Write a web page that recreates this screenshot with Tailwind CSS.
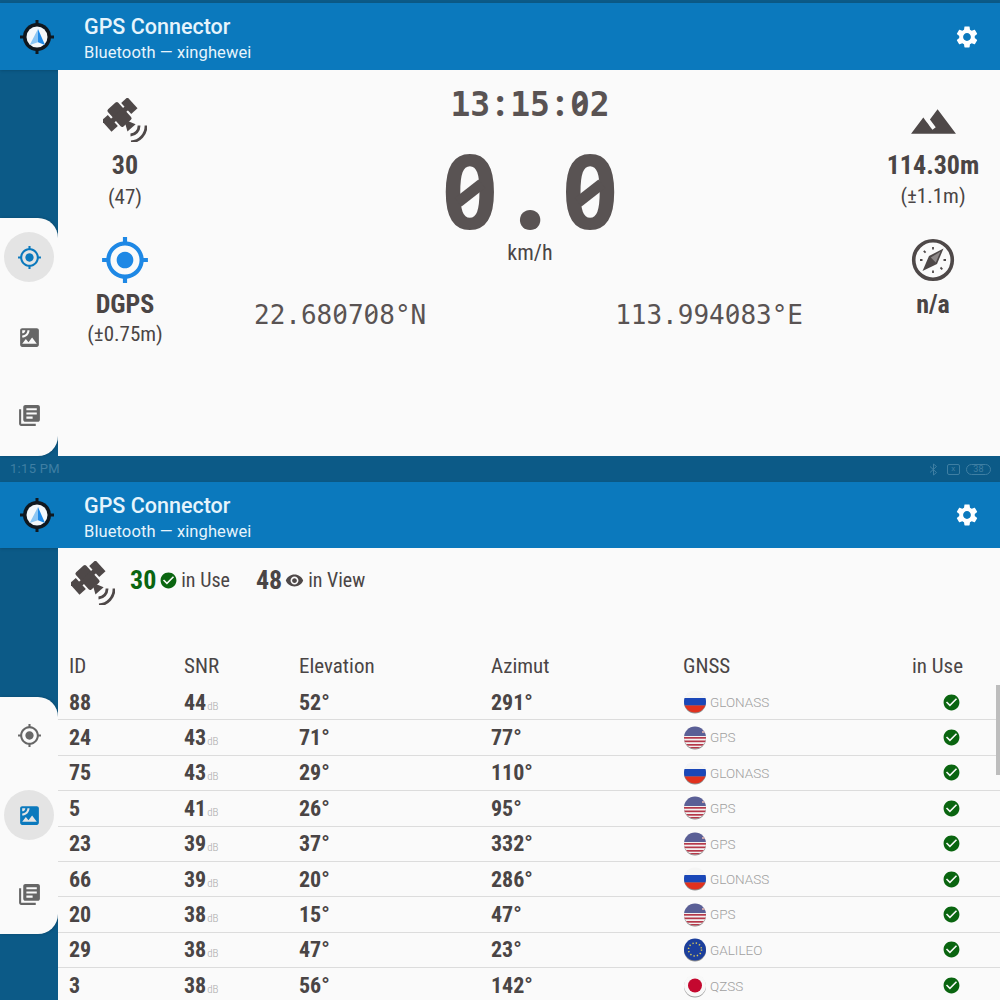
<!DOCTYPE html>
<html lang="en">
<head>
    <meta charset="UTF-8" />
    <title>GPS Connector</title>
    <script src="https://cdn.jsdelivr.net/npm/@tailwindcss/browser@4"></script>
</head>
<body class="bg-[#0c5a87] font-[Roboto,sans-serif] text-[#4a4545]">

<!-- shared icons -->
<svg class="absolute h-0 w-0">
    <defs>
        <clipPath id="flagClip"><circle cx="12" cy="11.5" r="11"/></clipPath>
        <symbol id="logo" viewBox="0 0 36 36">
            <path d="M16.500 1h3v34h-3zM1 16.500h34v3H1z" fill="#10181f"/>
            <circle cx="18" cy="18" r="14" fill="#10181f"/>
            <circle cx="18" cy="18" r="10.500" fill="#f4f8fb"/>
            <path d="M19 10 10.700 26l8.300-2.700z" fill="#8cc6f4"/>
            <path d="M19 10 26 26l-7-2.700z" fill="#1e88e5"/>
        </symbol>
        <symbol id="sat" viewBox="0 0 44 44">
            <g fill="#4e4848" transform="translate(16.500 16.500) rotate(-42)">
                <rect x="-7" y="-11.500" width="14" height="23" rx="2"/>
                <rect x="-10" y="-2.500" width="20" height="5"/>
                <rect x="-17.500" y="-7.500" width="8.500" height="15"/>
                <rect x="9" y="-7.500" width="8.500" height="15"/>
                <path d="M-2 11h4l3.500 7h-11z"/>
            </g>
            <path d="M43 27.500A16 16 0 0 1 28 44M36 27.500A9 9 0 0 1 27.500 37" fill="none" stroke="#4e4848" stroke-width="2.800"/>
        </symbol>
        <symbol id="gpsFixed" viewBox="0 0 24 24">
            <path d="M12 8c-2.210 0-4 1.790-4 4s1.790 4 4 4 4-1.790 4-4-1.790-4-4-4zm8.940 3c-.46-4.170-3.770-7.480-7.940-7.940V1h-2v2.060C6.830 3.520 3.520 6.830 3.060 11H1v2h2.060c.46 4.170 3.770 7.480 7.940 7.940V23h2v-2.060c4.170-.46 7.480-3.770 7.940-7.940H23v-2h-2.060zM12 19c-3.870 0-7-3.130-7-7s3.130-7 7-7 7 3.130 7 7-3.130 7-7 7z"/>
        </symbol>
        <symbol id="satellite" viewBox="0 0 24 24">
            <path d="M19 3H5c-1.100 0-2 .9-2 2v14c0 1.100.9 2 2 2h14c1.100 0 2-.9 2-2V5c0-1.100-.9-2-2-2zM5 4.990h3C8 6.650 6.660 8 5 8V4.990zM5 12v-2c2.760 0 5-2.250 5-5.010h2C12 8.860 8.870 12 5 12zm0 6l3.500-4.500 2.500 3.010L14.500 12l4.500 6H5z"/>
        </symbol>
        <symbol id="books" viewBox="0 0 24 24">
            <path d="M4 6H2v14c0 1.100.9 2 2 2h14v-2H4V6zm16-4H8c-1.100 0-2 .9-2 2v12c0 1.100.9 2 2 2h12c1.100 0 2-.9 2-2V4c0-1.100-.9-2-2-2zm-1 9H9V9h10v2zm-4 4H9v-2h6v2zm4-8H9V5h10v2z"/>
        </symbol>
        <symbol id="gear" viewBox="0 0 24 24">
            <path d="M19.140 12.940c.04-.3.06-.61.06-.94 0-.32-.02-.64-.07-.94l2.030-1.580c.18-.14.23-.41.12-.61l-1.920-3.320c-.12-.22-.37-.29-.59-.22l-2.390.96c-.5-.38-1.030-.7-1.620-.94l-.36-2.540c-.04-.24-.24-.41-.48-.41h-3.840c-.24 0-.43.17-.47.41l-.36 2.540c-.59.24-1.130.57-1.620.94l-2.390-.96c-.22-.08-.47 0-.59.22L2.740 8.870c-.12.21-.08.47.12.61l2.030 1.580c-.05.3-.09.63-.09.94s.02.64.07.94l-2.030 1.580c-.18.14-.23.41-.12.61l1.920 3.320c.12.22.37.29.59.22l2.390-.96c.5.38 1.030.7 1.620.94l.36 2.540c.05.24.24.41.48.41h3.840c.24 0 .44-.17.47-.41l.36-2.540c.59-.24 1.130-.56 1.620-.94l2.390.96c.22.08.47 0 .59-.22l1.920-3.320c.12-.22.07-.47-.12-.61l-2.010-1.580zM12 15.600c-1.980 0-3.600-1.620-3.600-3.600s1.620-3.600 3.600-3.600 3.600 1.620 3.600 3.600-1.620 3.600-3.600 3.600z"/>
        </symbol>
        <symbol id="check" viewBox="0 0 24 24">
            <path d="M12 2C6.480 2 2 6.480 2 12s4.480 10 10 10 10-4.480 10-10S17.520 2 12 2zm-2 15l-5-5 1.410-1.410L10 14.170l7.590-7.590L19 8l-9 9z"/>
        </symbol>
        <symbol id="ru" viewBox="0 0 24 24">
            <circle cx="12" cy="12.500" r="11" fill="#8f8f8f"/>
            <g clip-path="url(#flagClip)">
                <rect width="24" height="8.500" fill="#f5f5f5"/>
                <rect y="8" width="24" height="7.500" fill="#1a47b8"/>
                <rect y="15.500" width="24" height="8" fill="#e1311e"/>
            </g>
        </symbol>
        <symbol id="us" viewBox="0 0 24 24">
            <circle cx="12" cy="12.500" r="11" fill="#8f8f8f"/>
            <g clip-path="url(#flagClip)">
                <rect width="24" height="24" fill="#f3f0f0"/>
                <rect y="11" width="24" height="1.700" fill="#b5394a"/>
                <rect y="14.500" width="24" height="1.700" fill="#b5394a"/>
                <rect y="18" width="24" height="1.700" fill="#b5394a"/>
                <rect y="21" width="24" height="2" fill="#b5394a"/>
                <rect width="24" height="10" fill="#5a5f96"/>
                <rect x="19" width="5" height="2.500" fill="#c9a4ac"/>
                <rect x="19" y="5" width="5" height="2" fill="#c9a4ac"/>
            </g>
        </symbol>
        <symbol id="eu" viewBox="0 0 24 24">
            <circle cx="12" cy="12.500" r="11" fill="#8f8f8f"/>
            <circle cx="12" cy="11.500" r="11" fill="#1c3f9c"/>
            <circle cx="12" cy="11.500" r="6.500" fill="none" stroke="#d8c85a" stroke-width="1.500" stroke-dasharray="1.300 2.100"/>
        </symbol>
        <symbol id="jp" viewBox="0 0 24 24">
            <circle cx="12" cy="12.500" r="11" fill="#a0a0a0"/>
            <circle cx="12" cy="11.500" r="11" fill="#f8f8f8"/>
            <circle cx="12" cy="11.500" r="7" fill="#c4082f"/>
        </symbol>
    </defs>
</svg>

<div class="relative h-[1000px] w-[1000px] overflow-hidden">

    <!-- Speed screen -->
    <div class="h-[3px] bg-[#0c5a87]"></div>
    <header class="flex h-[67px] items-center bg-[#0b79bd] shadow-sm">
        <svg class="ml-[19px] h-9 w-9"><use href="#logo"/></svg>
        <div class="ml-[29px] flex-1 pt-[7px] text-[#e6f4fc]">
            <div class="text-[21.500px] leading-[26px] font-medium">GPS Connector</div>
            <div class="text-[16.500px] leading-[26px] tracking-[0.1px]">Bluetooth — xinghewei</div>
        </div>
        <svg class="mr-[20px] h-[26px] w-[26px] fill-white"><use href="#gear"/></svg>
    </header>
    <div class="flex h-[386px]">
        <div class="w-[58px] pt-[148px]">
            <nav class="flex h-[238px] flex-col items-center rounded-r-[20px] bg-[#fafafa] pt-[14px] shadow-[1px_0_3px_rgba(0,0,0,0.2)]">
                <div class="flex h-[50px] w-[50px] items-center justify-center rounded-full bg-[#e4e4e4]">
                    <svg class="h-[25px] w-[25px] fill-[#0b79bd]"><use href="#gpsFixed"/></svg>
                </div>
                <svg class="mt-[43px] h-[25px] w-[25px] fill-[#666]"><use href="#satellite"/></svg>
                <svg class="mt-[53px] h-[25px] w-[25px] fill-[#666]"><use href="#books"/></svg>
            </nav>
        </div>
        <main class="flex flex-1 bg-[#fafafa]">
            <div class="flex w-[134px] flex-col items-center pt-[28px]">
                <svg class="h-[44px] w-[44px]"><use href="#sat"/></svg>
                <div class="mt-[8px] text-[26px] leading-[30px] font-bold [font-stretch:75%]">30</div>
                <div class="mt-[2px] text-[21px] leading-[30px] [font-stretch:75%]">(47)</div>
                <svg class="mt-[23px] h-[50px] w-[50px] fill-[#1e88e5]"><use href="#gpsFixed"/></svg>
                <div class="mt-[4px] text-[26px] leading-[30px] font-bold [font-stretch:75%]">DGPS</div>
                <div class="text-[21px] leading-[30px] [font-stretch:75%]">(±0.75m)</div>
            </div>
            <div class="flex flex-1 flex-col items-center">
                <div class="mt-[15px] ml-[2px] font-['DejaVu_Sans_Mono',monospace] text-[33px] leading-[40px] font-bold text-[#595353]">13<span class="inline-block w-[20px] text-center font-['Lato',sans-serif] text-[40px] leading-[0]">:</span>15<span class="inline-block w-[20px] text-center font-['Lato',sans-serif] text-[40px] leading-[0]">:</span><span class="relative inline-block">0<i class="absolute left-1/2 top-[48%] h-[0.25em] w-[0.14em] -translate-x-1/2 -translate-y-1/2 bg-[#fafafa]"></i><i class="absolute left-1/2 top-[48%] h-[0.11em] w-[0.3em] -translate-x-1/2 -translate-y-1/2 -rotate-[38deg] bg-current"></i></span>2</div>
                <div class="mt-[15px] ml-[2px] font-['DejaVu_Sans_Mono',monospace] text-[100px] leading-[110px] font-bold text-[#595353]"><span class="relative inline-block">0<i class="absolute left-1/2 top-[48%] h-[0.25em] w-[0.14em] -translate-x-1/2 -translate-y-1/2 bg-[#fafafa]"></i><i class="absolute left-1/2 top-[48%] h-[0.11em] w-[0.3em] -translate-x-1/2 -translate-y-1/2 -rotate-[38deg] bg-current"></i></span><span class="inline-block w-[60px] text-center font-['Lato',sans-serif] text-[125px] leading-[0] font-black">.</span><span class="relative inline-block">0<i class="absolute left-1/2 top-[48%] h-[0.25em] w-[0.14em] -translate-x-1/2 -translate-y-1/2 bg-[#fafafa]"></i><i class="absolute left-1/2 top-[48%] h-[0.11em] w-[0.3em] -translate-x-1/2 -translate-y-1/2 -rotate-[38deg] bg-current"></i></span></div>
                <div class="-mt-[11px] ml-[2px] text-[22px] leading-[28px] [font-stretch:75%]">km/h</div>
                <div class="mt-[32px] flex w-full justify-between pr-[63px] pl-[62px] font-['DejaVu_Sans_Mono',monospace] text-[26px] leading-[32px] text-[#595353]">
                    <span>22.68<span class="relative inline-block">0<i class="absolute left-1/2 top-[48%] h-[0.25em] w-[0.14em] -translate-x-1/2 -translate-y-1/2 bg-[#fafafa]"></i><i class="absolute left-1/2 top-[48%] h-[0.08em] w-[0.3em] -translate-x-1/2 -translate-y-1/2 -rotate-[38deg] bg-current"></i></span>7<span class="relative inline-block">0<i class="absolute left-1/2 top-[48%] h-[0.25em] w-[0.14em] -translate-x-1/2 -translate-y-1/2 bg-[#fafafa]"></i><i class="absolute left-1/2 top-[48%] h-[0.08em] w-[0.3em] -translate-x-1/2 -translate-y-1/2 -rotate-[38deg] bg-current"></i></span>8°N</span>
                    <span>113.994<span class="relative inline-block">0<i class="absolute left-1/2 top-[48%] h-[0.25em] w-[0.14em] -translate-x-1/2 -translate-y-1/2 bg-[#fafafa]"></i><i class="absolute left-1/2 top-[48%] h-[0.08em] w-[0.3em] -translate-x-1/2 -translate-y-1/2 -rotate-[38deg] bg-current"></i></span>83°E</span>
                </div>
            </div>
            <div class="flex w-[134px] flex-col items-center pt-[27px]">
                <svg class="h-[49px] w-[49px] fill-[#4e4848]" viewBox="0 0 24 24"><path d="M14 6l-3.750 5 2.850 3.800-1.600 1.200C9.810 13.750 7 10 7 10l-6 8h22L14 6z"/></svg>
                <div class="mt-[4px] text-[26px] leading-[30px] font-bold [font-stretch:75%]">114.30m</div>
                <div class="mt-[1px] text-[21px] leading-[30px] [font-stretch:75%]">(±1.1m)</div>
                <svg class="mt-[27px] h-[44px] w-[44px]" viewBox="0 0 44 44">
                    <circle cx="22" cy="22" r="19.300" fill="none" stroke="#4e4848" stroke-width="3.600"/>
                    <path d="M32.500 10.500 26 26 11.500 33 18 18z" fill="#4e4848"/>
                    <path d="M29.500 13.500 24.800 24.500 19.800 19.500z" fill="#8d8888"/>
                    <path d="M22 9v2.500M22 32.500V35M9 22h2.500M32.500 22H35M12.800 12.800l1.800 1.800M29.500 29.500l1.800 1.800" stroke="#4e4848" stroke-width="1.800"/>
                </svg>
                <div class="mt-[7px] text-[26px] leading-[30px] font-bold [font-stretch:75%]">n/a</div>
            </div>
        </main>
    </div>

    <!-- Status bar -->
    <div class="flex h-[26px] items-center bg-[#0c5a87] pr-[9px] pl-[10px] text-[13px] tracking-[0.3px] text-[#3f7fa3]">
        <span class="flex-1">1:15 PM</span>
        <svg class="h-[13px] w-[9px]" viewBox="0 0 9 13" fill="none" stroke="#3f7fa3"><path d="m1 3.500 6.500 6L4.500 12V1l3 2.500L1 9.500"/></svg>
        <span class="ml-[9px] flex h-[11px] w-[13px] items-center justify-center rounded-[2px] border border-[#3f7fa3] text-[8px] leading-none">x</span>
        <span class="ml-[6px] flex h-[11px] w-[25px] items-center justify-center rounded-full border border-[#3f7fa3] text-[9px] leading-none">38</span>
    </div>

    <!-- Satellites screen -->
    <header class="flex h-[66px] items-center bg-[#0b79bd] shadow-sm">
        <svg class="ml-[19px] h-9 w-9"><use href="#logo"/></svg>
        <div class="ml-[29px] flex-1 pt-[7px] text-[#e6f4fc]">
            <div class="text-[21.500px] leading-[26px] font-medium">GPS Connector</div>
            <div class="text-[16.500px] leading-[26px] tracking-[0.1px]">Bluetooth — xinghewei</div>
        </div>
        <svg class="mr-[20px] h-[26px] w-[26px] fill-white"><use href="#gear"/></svg>
    </header>
    <div class="flex">
        <div class="w-[58px] pt-[149px]">
            <nav class="flex h-[237px] flex-col items-center rounded-r-[20px] bg-[#fafafa] pt-[26px] shadow-[1px_0_3px_rgba(0,0,0,0.2)]">
                <svg class="h-[25px] w-[25px] fill-[#666]"><use href="#gpsFixed"/></svg>
                <div class="mt-[42px] flex h-[50px] w-[50px] items-center justify-center rounded-full bg-[#e4e4e4]">
                    <svg class="h-[25px] w-[25px] fill-[#0b79bd]"><use href="#satellite"/></svg>
                </div>
                <svg class="mt-[42px] h-[25px] w-[25px] fill-[#666]"><use href="#books"/></svg>
            </nav>
        </div>
        <main class="flex-1 bg-[#fafafa] pl-[11px]">
            <div class="flex h-[72px] items-center pb-[8px]">
                <svg class="mt-[6px] ml-[2px] h-[44px] w-[44px]"><use href="#sat"/></svg>
                <span class="ml-[15px] text-[26px] font-bold text-[#0a6510] [font-stretch:75%]">30</span>
                <svg class="ml-[3px] h-[19px] w-[19px] fill-[#0a6510]"><use href="#check"/></svg>
                <span class="ml-[3px] text-[20px] [font-stretch:75%]">in Use</span>
                <span class="ml-[26px] text-[26px] font-bold [font-stretch:75%]">48</span>
                <svg class="ml-[3px] h-[19px] w-[19px] fill-[#4e4848]" viewBox="0 0 24 24"><path d="M12 4.500C7 4.500 2.730 7.610 1 12c1.730 4.390 6 7.500 11 7.500s9.270-3.110 11-7.500c-1.730-4.390-6-7.500-11-7.500zM12 17c-2.760 0-5-2.240-5-5s2.240-5 5-5 5 2.240 5 5-2.240 5-5 5zm0-8c-1.660 0-3 1.340-3 3s1.340 3 3 3 3-1.340 3-3-1.340-3-3-3z"/></svg>
                <span class="ml-[4px] text-[20px] [font-stretch:75%]">in View</span>
            </div>

            <div class="mt-[31px] grid h-[34px] grid-cols-[115px_115px_192px_192px_256px_24px] items-center pb-[2px] text-[21px] [font-stretch:75%]">
                <span>ID</span><span>SNR</span><span>Elevation</span><span>Azimut</span><span>GNSS</span><span class="justify-self-end whitespace-nowrap">in Use</span>
            </div>

            <div class="-ml-[11px]">
                <div class="grid h-[35.400px] grid-cols-[115px_115px_192px_192px_256px_24px] items-center border-b-[1.500px] border-[#dcdcdc] pl-[11px] text-[22px] font-bold [font-stretch:75%]">
                    <span>88</span><span>44<small class="ml-[1px] text-[11px] font-light text-[#aaa]">dB</small></span><span>52°</span><span>291°</span>
                    <span class="flex items-center gap-[3px] text-[13.500px] font-light text-[#a0a0a0] [font-stretch:100%]"><svg class="h-6 w-6"><use href="#ru"/></svg>GLONASS</span>
                    <svg class="h-[19px] w-[19px] justify-self-center fill-[#0a6510]"><use href="#check"/></svg>
                </div>
                <div class="grid h-[35.400px] grid-cols-[115px_115px_192px_192px_256px_24px] items-center border-b-[1.500px] border-[#dcdcdc] pl-[11px] text-[22px] font-bold [font-stretch:75%]">
                    <span>24</span><span>43<small class="ml-[1px] text-[11px] font-light text-[#aaa]">dB</small></span><span>71°</span><span>77°</span>
                    <span class="flex items-center gap-[3px] text-[13.500px] font-light text-[#a0a0a0] [font-stretch:100%]"><svg class="h-6 w-6"><use href="#us"/></svg>GPS</span>
                    <svg class="h-[19px] w-[19px] justify-self-center fill-[#0a6510]"><use href="#check"/></svg>
                </div>
                <div class="grid h-[35.400px] grid-cols-[115px_115px_192px_192px_256px_24px] items-center border-b-[1.500px] border-[#dcdcdc] pl-[11px] text-[22px] font-bold [font-stretch:75%]">
                    <span>75</span><span>43<small class="ml-[1px] text-[11px] font-light text-[#aaa]">dB</small></span><span>29°</span><span>110°</span>
                    <span class="flex items-center gap-[3px] text-[13.500px] font-light text-[#a0a0a0] [font-stretch:100%]"><svg class="h-6 w-6"><use href="#ru"/></svg>GLONASS</span>
                    <svg class="h-[19px] w-[19px] justify-self-center fill-[#0a6510]"><use href="#check"/></svg>
                </div>
                <div class="grid h-[35.400px] grid-cols-[115px_115px_192px_192px_256px_24px] items-center border-b-[1.500px] border-[#dcdcdc] pl-[11px] text-[22px] font-bold [font-stretch:75%]">
                    <span>5</span><span>41<small class="ml-[1px] text-[11px] font-light text-[#aaa]">dB</small></span><span>26°</span><span>95°</span>
                    <span class="flex items-center gap-[3px] text-[13.500px] font-light text-[#a0a0a0] [font-stretch:100%]"><svg class="h-6 w-6"><use href="#us"/></svg>GPS</span>
                    <svg class="h-[19px] w-[19px] justify-self-center fill-[#0a6510]"><use href="#check"/></svg>
                </div>
                <div class="grid h-[35.400px] grid-cols-[115px_115px_192px_192px_256px_24px] items-center border-b-[1.500px] border-[#dcdcdc] pl-[11px] text-[22px] font-bold [font-stretch:75%]">
                    <span>23</span><span>39<small class="ml-[1px] text-[11px] font-light text-[#aaa]">dB</small></span><span>37°</span><span>332°</span>
                    <span class="flex items-center gap-[3px] text-[13.500px] font-light text-[#a0a0a0] [font-stretch:100%]"><svg class="h-6 w-6"><use href="#us"/></svg>GPS</span>
                    <svg class="h-[19px] w-[19px] justify-self-center fill-[#0a6510]"><use href="#check"/></svg>
                </div>
                <div class="grid h-[35.400px] grid-cols-[115px_115px_192px_192px_256px_24px] items-center border-b-[1.500px] border-[#dcdcdc] pl-[11px] text-[22px] font-bold [font-stretch:75%]">
                    <span>66</span><span>39<small class="ml-[1px] text-[11px] font-light text-[#aaa]">dB</small></span><span>20°</span><span>286°</span>
                    <span class="flex items-center gap-[3px] text-[13.500px] font-light text-[#a0a0a0] [font-stretch:100%]"><svg class="h-6 w-6"><use href="#ru"/></svg>GLONASS</span>
                    <svg class="h-[19px] w-[19px] justify-self-center fill-[#0a6510]"><use href="#check"/></svg>
                </div>
                <div class="grid h-[35.400px] grid-cols-[115px_115px_192px_192px_256px_24px] items-center border-b-[1.500px] border-[#dcdcdc] pl-[11px] text-[22px] font-bold [font-stretch:75%]">
                    <span>20</span><span>38<small class="ml-[1px] text-[11px] font-light text-[#aaa]">dB</small></span><span>15°</span><span>47°</span>
                    <span class="flex items-center gap-[3px] text-[13.500px] font-light text-[#a0a0a0] [font-stretch:100%]"><svg class="h-6 w-6"><use href="#us"/></svg>GPS</span>
                    <svg class="h-[19px] w-[19px] justify-self-center fill-[#0a6510]"><use href="#check"/></svg>
                </div>
                <div class="grid h-[35.400px] grid-cols-[115px_115px_192px_192px_256px_24px] items-center border-b-[1.500px] border-[#dcdcdc] pl-[11px] text-[22px] font-bold [font-stretch:75%]">
                    <span>29</span><span>38<small class="ml-[1px] text-[11px] font-light text-[#aaa]">dB</small></span><span>47°</span><span>23°</span>
                    <span class="flex items-center gap-[3px] text-[13.500px] font-light text-[#a0a0a0] [font-stretch:100%]"><svg class="h-6 w-6"><use href="#eu"/></svg>GALILEO</span>
                    <svg class="h-[19px] w-[19px] justify-self-center fill-[#0a6510]"><use href="#check"/></svg>
                </div>
                <div class="grid h-[35.400px] grid-cols-[115px_115px_192px_192px_256px_24px] items-center pl-[11px] text-[22px] font-bold [font-stretch:75%]">
                    <span>3</span><span>38<small class="ml-[1px] text-[11px] font-light text-[#aaa]">dB</small></span><span>56°</span><span>142°</span>
                    <span class="flex items-center gap-[3px] text-[13.500px] font-light text-[#a0a0a0] [font-stretch:100%]"><svg class="h-6 w-6"><use href="#jp"/></svg>QZSS</span>
                    <svg class="h-[19px] w-[19px] justify-self-center fill-[#0a6510]"><use href="#check"/></svg>
                </div>
            </div>
        </main>
    </div>

    <!-- scrollbar sits over the list -->
    <div class="absolute top-[685px] right-0 h-[90px] w-[4px] bg-[#bdbdbd]"></div>
</div>

</body>
</html>
